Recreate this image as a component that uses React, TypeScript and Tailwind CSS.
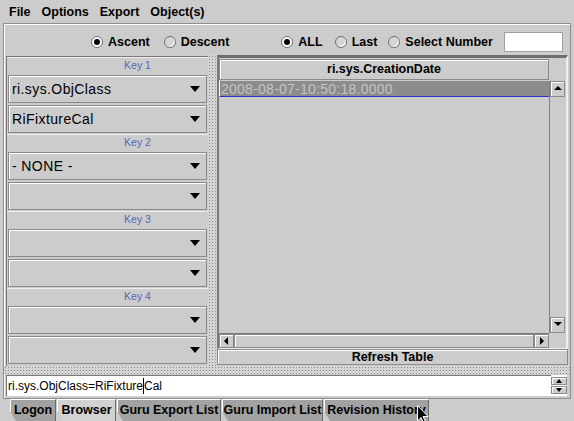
import React from 'react';

const raised = 'border border-[#8a8a8a] shadow-[inset_1px_1px_0_#ffffff]';
const dots = 'bg-[#d4d4d4] bg-[radial-gradient(#8c8c8c_0.8px,transparent_1px)] bg-[length:3px_3px]';

function Radio({ label, checked, className = '' }: { label: string; checked?: boolean; className?: string }) {
  return (
    <div className={`flex items-center gap-[5px] ${className}`}>
      <span
        className={`w-[12px] h-[12px] rounded-full border border-[#707070] flex items-center justify-center ${
          checked ? 'bg-white' : 'bg-[#d6d6d6] shadow-[inset_-1px_-1px_0_#ffffff]'
        }`}
      >
        {checked && <span className="w-[6px] h-[6px] rounded-full bg-black" />}
      </span>
      <span className="font-bold text-[12.5px] leading-none">{label}</span>
    </div>
  );
}

function DownArrow() {
  return (
    <svg width="10" height="6" viewBox="0 0 10 6" className="shrink-0">
      <polygon points="0,0 10,0 5,6" fill="#000" />
    </svg>
  );
}

function Combo({ value }: { value?: string }) {
  return (
    <div className={`my-[1px] mx-[1px] h-[28px] flex items-center pl-[3px] pr-[6px] ${raised}`}>
      <span className="flex-1 text-[14px] tracking-[0.4px] text-black">{value}</span>
      <DownArrow />
    </div>
  );
}

function KeyHeader({ n }: { n: number }) {
  return (
    <div className="h-[17px] flex items-center justify-center pl-[60px] text-[10.5px] text-[#5467b4] border-t border-t-[#eeeeee]">
      Key {n}
    </div>
  );
}

function ArrowButton({ dir, className = '' }: { dir: 'up' | 'down' | 'left' | 'right'; className?: string }) {
  const pts = {
    up: '1,6 9,6 5,2',
    down: '1,2 9,2 5,6',
    left: '6,1 6,9 2,5',
    right: '3,1 3,9 7,5',
  }[dir];
  return (
    <div className={`flex items-center justify-center ${raised} ${className}`}>
      <svg width="10" height="10" viewBox="0 0 10 10">
        <polygon points={pts} fill="#000" />
      </svg>
    </div>
  );
}

const TABS = [
  { label: 'Logon', w: 'w-[46px]' },
  { label: 'Browser', w: 'w-[59px]', active: true },
  { label: 'Guru Export List', w: 'w-[104px]' },
  { label: 'Guru Import List', w: 'w-[101px]' },
  { label: 'Revision History', w: 'w-[105px]' },
];

export default function App() {
  return (
    <div className="w-[574px] h-[421px] bg-[#cccccc] overflow-hidden relative font-['Liberation_Sans',Arial,sans-serif] text-black select-none">
      {/* menu bar */}
      <div className="h-[23px] flex items-center pl-[9px] pt-[1px] gap-[11px] text-[12.5px] font-bold">
        <span>File</span>
        <span>Options</span>
        <span>Export</span>
        <span>Object(s)</span>
      </div>

      {/* browser panel */}
      <div className="mx-[3px] h-[376px] border border-[#8e8e8e] shadow-[inset_1px_1px_0_#ffffff] flex flex-col">
        {/* sort / filter options */}
        <div className="h-[31px] pt-[5px] flex items-center">
          <Radio label="Ascent" checked className="ml-[87px]" />
          <Radio label="Descent" className="ml-[14px]" />
          <Radio label="ALL" checked className="ml-[52px]" />
          <Radio label="Last" className="ml-[12px]" />
          <Radio label="Select Number" className="ml-[11px]" />
          <div className="ml-[11px] w-[59px] h-[20px] bg-white border border-[#a0a0a0]" />
        </div>

        <div className="h-[311px] flex">
          {/* sort keys */}
          <div className="ml-[2px] mt-[1px] w-[202px] h-[310px] border-t border-l border-[#7a7a7a] flex flex-col">
            <KeyHeader n={1} />
            <Combo value="ri.sys.ObjClass" />
            <Combo value="RiFixtureCal" />
            <KeyHeader n={2} />
            <Combo value="- NONE -" />
            <Combo />
            <KeyHeader n={3} />
            <Combo />
            <Combo />
            <KeyHeader n={4} />
            <Combo />
            <Combo />
          </div>

          <div className={`w-[9px] ${dots}`} />

          {/* results table */}
          <div className="w-[351px] flex flex-col">
            <div className="h-[294px] border-t-[3px] border-l-2 border-t-[#6e6e6e] border-l-[#7a7a7a] border-r-2 border-b border-r-[#eeeeee] border-b-[#eeeeee] grid grid-cols-[330px_16px] grid-rows-[23px_252px_15px]">
              <div className="pt-[1px]">
                <div className={`h-[21px] flex items-center justify-center font-bold text-[12.5px] ${raised}`}>
                  ri.sys.CreationDate
                </div>
              </div>
              <div />
              <div className="flex flex-col">
                <div className="h-[16px] bg-[#8c8c8c] border-l border-l-white border-b border-b-[#2f2fc0] flex items-center pl-[1px] text-[14px] tracking-[0.25px] leading-none text-[#c4c4c4]">
                  2008-08-07-10:50:18.0000
                </div>
              </div>
              <div className="flex flex-col border-l border-l-[#808080]">
                <ArrowButton dir="up" className="h-[16px]" />
                <div className="flex-1" />
                <ArrowButton dir="down" className="h-[16px]" />
              </div>
              <div className="flex border-t border-t-[#7a7a7a]">
                <ArrowButton dir="left" className="w-[15px]" />
                <div className={`flex-1 ${raised}`} />
                <ArrowButton dir="right" className="w-[15px]" />
              </div>
              <div />
            </div>
            <div className={`h-[16px] flex items-center justify-center font-bold text-[12.5px] ${raised}`}>
              Refresh Table
            </div>
          </div>
        </div>

        <div className={`h-[8px] ${dots}`} />

        {/* query line */}
        <div className="mt-[1px] mx-[2px] h-[21px] flex">
          <div className="w-[545px] bg-white border-t border-l border-[#7a7a7a] flex items-center pl-[1px] text-[12px]">
            <span>ri.sys.ObjClass=RiFixture</span>
            <span className="border-l border-black h-[16px]" />
            <span>Cal</span>
          </div>
          <div className="w-[16px] flex flex-col justify-center bg-white py-[2px]">
            <div className={`h-[8px] flex items-center justify-center bg-[#cccccc] ${raised}`}>
              <svg width="6" height="4" viewBox="0 0 6 4"><polygon points="0,4 6,4 3,0" fill="#000" /></svg>
            </div>
            <div className={`h-[8px] mt-[1px] flex items-center justify-center bg-[#cccccc] ${raised}`}>
              <svg width="6" height="4" viewBox="0 0 6 4"><polygon points="0,0 6,0 3,4" fill="#000" /></svg>
            </div>
          </div>
        </div>
      </div>

      {/* tabs */}
      <div className="h-[22px] flex pl-[10px] gap-[1px]">
        {TABS.map((t) => (
          <div
            key={t.label}
            className={`${t.w} h-[22px] flex items-center justify-center font-bold text-[12.5px] border-t border-l border-t-white border-l-white border-r border-r-[#6a6a6a] [clip-path:polygon(0_0,100%_0,100%_100%,6px_100%,0_55%)] ${
              t.active ? 'bg-[#d2d2d2]' : 'bg-[#a2a2a2]'
            }`}
          >
            {t.label}
          </div>
        ))}
      </div>

      {/* mouse pointer */}
      <svg className="absolute left-[417px] top-[405px]" width="12" height="19" viewBox="0 0 12 19">
        <polygon points="0.5,0.5 0.5,16 4,12.5 7,18.5 9,17.5 6,11.5 11,11.5" fill="#000" stroke="#fff" strokeWidth="1" />
      </svg>
    </div>
  );
}
